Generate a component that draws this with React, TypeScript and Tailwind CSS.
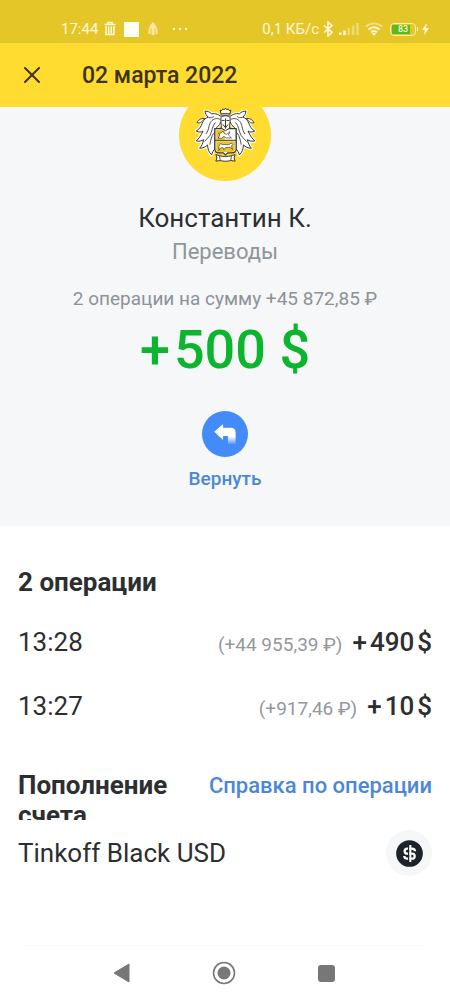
import * as React from 'react';

interface Operation {
  time: string;
  rub: string;
  amount: string;
}

const operations: Operation[] = [
  { time: '13:28', rub: '(+44 955,39 ₽)', amount: '490' },
  { time: '13:27', rub: '(+917,46 ₽)', amount: '10' },
];

const StatusBar = () => (
  <div className="flex h-[43px] items-end justify-between bg-[#e4c629] pr-[21px] pb-1 pl-[61px] text-[15px] leading-5 text-[#fdf8d8]">
    <div className="flex items-center">
      <span>17:44</span>
      <svg className="ml-[6px] h-4 w-3" viewBox="0 0 12 16" fill="none" stroke="currentColor">
        <path d="M0.5 3.5h11M4 3V1.5h4V3" strokeWidth="1.6" />
        <path d="M2 5v8.5h8V5M4.7 5.5v7M7.3 5.5v7" strokeWidth="1.6" />
      </svg>
      <span className="ml-2 size-[15px] bg-[#fffef5]" />
      <svg className="ml-[9px] h-4 w-[10px] opacity-70" viewBox="0 0 10 16" fill="currentColor">
        <path d="M5 1C2.500 3.500 1.500 5 1.500 7L.5 8v5h2V7.500h1V14h3V7.500h1V13h2V8l-1-1C8.500 5 7.500 3.500 5 1Z" />
      </svg>
      <svg className="ml-[14px] h-4 w-4" viewBox="0 0 16 16" fill="currentColor">
        <circle cx="2" cy="8" r="1.200" />
        <circle cx="8" cy="8" r="1.200" />
        <circle cx="14" cy="8" r="1.200" />
      </svg>
    </div>
    <div className="flex items-center">
      <span>0,1 КБ/с</span>
      <svg className="ml-1 h-4 w-[10px]" viewBox="0 0 10 16" fill="none" stroke="currentColor" strokeWidth="1.600">
        <path d="M1 4.500 9 11.300 5 15V1l4 3.700L1 11.500" />
      </svg>
      <svg className="ml-[6px] h-4 w-5" viewBox="0 0 20 16" fill="currentColor">
        <path d="M0 11.500h2.500V14H0zM4.300 9.500h2.500V14H4.300z" />
        <path d="M8.600 7h2.500v7H8.600zM12.900 4.500h2.500V14h-2.500zM17.200 2h2.500v12h-2.500z" opacity=".4" />
      </svg>
      <svg className="ml-[6px] h-4 w-[18px]" viewBox="0 0 18 16" fill="none" stroke="currentColor" strokeWidth="2">
        <path d="M.8 5.800a11.600 11.600 0 0 1 16.400 0" opacity=".5" />
        <path d="M3.400 8.600a8 8 0 0 1 11.200 0M6 11.300a4.300 4.300 0 0 1 6 0" />
        <path d="m9 15-2-2.200a2.800 2.800 0 0 1 4 0z" fill="currentColor" stroke="none" />
      </svg>
      <span className="ml-[7px] flex h-[13px] w-[26px] items-center rounded border border-[#f7efb5] p-px">
        <span className="flex h-[9px] w-[18px] items-center justify-center bg-[#5dba1d] pl-1 text-[9px] leading-none font-medium">83</span>
      </span>
      <span className="ml-px h-1 w-px bg-[#f7efb5]" />
      <svg className="ml-1 h-3 w-[7px]" viewBox="0 0 7 12" fill="currentColor">
        <path d="M4.800 0 0 7h2.800L2 12l5-7H4z" />
      </svg>
    </div>
  </div>
);

const leaf =
  'M84 32C72 22 62 18 50 20 44 14 38 12 30 12c2 8 4 14 10 18-8 2-14 8-18 18-4 10-8 18-18 24 8 4 14 4 20 0-6 14-12 22-20 30 8 2 16 0 22-4-2 12-6 18-12 26 10 0 18-4 24-10 0 12 4 22 12 30 2-8 6-14 10-18V66c10-6 18-18 24-34Z';

// One half of the mantling, mirrored for the other side
const Mantling = () => (
  <g strokeLinejoin="round" strokeLinecap="round">
    <path d={leaf} fill="#fff" stroke="#fff" strokeWidth="9" />
    <path d={leaf} fill="#fff" stroke="#33322d" strokeWidth="3" />
    <path
      d="M74 36C62 31 52 37 46 47c-6 12-3 21-12 33M61 47c-10 9-8 25-16 38-6 8-10 12-16 18M57 78c-8 9-9 20-12 34M42 31c5 2 10 1 14-2"
      fill="none"
      stroke="#33322d"
      strokeWidth="2.500"
    />
    <path d="M28 34C18 33 10 38 6 47c10 2 17-3 22-13Z" fill="#fff" stroke="#33322d" strokeWidth="2.500" />
  </g>
);

const Crest = () => (
  <svg className="h-14 w-[61px]" viewBox="0 0 184 168" role="img" aria-label="Tinkoff">
    <Mantling />
    <g transform="translate(184 0) scale(-1 1)">
      <Mantling />
    </g>
    <path d="M60 65h64v62c0 8-7 11-14 11H99l-7 6-7-6H74c-8 0-14-3-14-11Z" fill="#fff" stroke="#37352c" strokeWidth="3.500" />
    <path d="M64 69h26v29H64zM64 103h56v27c0 3-4 5-9 5H73c-5 0-9-2-9-5Z" fill="#eec221" />
    <path d="M60 100h64" stroke="#37352c" strokeWidth="3" />
    <path
      d="m70 93 5-9-4-5 8-1 5-6 4 7 8 3 9-8-4 10 9 9H94l-7-5-7 6zM72 118l5-8 7 3h19l6-5 5 5-4 4 3 11-7-7-14 1-5 7-3-7-8 2-4 7Z"
      fill="#fff"
      stroke="#37352c"
      strokeWidth="2"
      strokeLinejoin="round"
    />
    <path d="M79 63c2-8-2-15-1-31 5-8 23-8 28 0 1 16-3 23-1 31l-13 8Z" fill="#fff" stroke="#37352c" strokeWidth="3" />
    <path d="M80 40h9M95 40h9M92 34v31M84 52l8 10 8-10" fill="none" stroke="#37352c" strokeWidth="3" />
    <path d="M76 9c4 3 7 1 8-4 3 4 6 3 8-2 2 5 5 6 8 2 1 5 4 7 8 4l-3 15H79Z" fill="#fff" stroke="#37352c" strokeWidth="3" />
    <path d="M79 19h26" stroke="#37352c" strokeWidth="2.500" />
    <path
      d="m63 143 10 3c12 4 26 4 38 0l10-3-3 10 3 10-13-2c-11 3-21 3-32 0l-13 2 3-10Z"
      fill="#fff"
      stroke="#37352c"
      strokeWidth="3"
    />
    <path d="m74 147 2 13M110 147l-2 13" stroke="#37352c" strokeWidth="2.500" />
  </svg>
);

const ReturnIcon = () => (
  <svg className="h-5 w-[22px]" viewBox="0 0 66 62">
    <defs>
      <linearGradient id="tail" x1="0" y1="0" x2="0" y2="1">
        <stop offset="0.1" stopColor="#fff" />
        <stop offset="1" stopColor="#fff" stopOpacity="0.1" />
      </linearGradient>
    </defs>
    <path d="M0 24 24 2q3-2 3 2v8h24q15 0 15 15v10H27v9q0 4-3 1Z" fill="#fff" />
    <path d="M42 37h24v25H42Z" fill="url(#tail)" />
  </svg>
);

const DollarIcon = () => (
  <svg className="size-[27px]" viewBox="0 0 81 81">
    <circle cx="40.500" cy="40.500" r="40" fill="#1d222b" />
    <g fill="none">
      <path d="M57 34c0-5-4-8-9-8H34c-5 0-8 3-8 7.500s3 7.500 8 7.500h14c5 0 8 3 8 7.500S53 56 48 56H34c-5 0-9-3-9-8" stroke="#fff" strokeWidth="7" />
      <path d="M38 18v46" stroke="#1d222b" strokeWidth="4" />
      <path d="M43 15v51" stroke="#fff" strokeWidth="6" />
    </g>
  </svg>
);

const Summary = () => (
  <section className="flex flex-col items-center overflow-hidden bg-[#f5f7f9] pb-[33px] text-center">
    <div className="-mt-[18px] flex size-[92px] items-center justify-center rounded-full bg-[#ffdc2f]">
      <Crest />
    </div>
    <h2 className="mt-[19px] text-[26px] leading-9 text-[#2d2e30]">Константин К.</h2>
    <p className="text-[22px] leading-8 text-[#909599]">Переводы</p>
    <p className="mt-[17px] text-[19px] leading-7 text-[#8d9297]">2 операции на сумму +45 872,85 ₽</p>
    <p className="mt-[5px] flex gap-1 text-[54px] leading-[64px] font-medium text-[#0db52f]">
      <span>+</span>
      <span>500 $</span>
    </p>
    <button type="button" className="mt-[29px] flex flex-col items-center gap-2 text-[19px] leading-7 font-medium text-[#4a87d9]">
      <span className="flex size-[46px] items-center justify-center rounded-full bg-[#428bf9]">
        <ReturnIcon />
      </span>
      Вернуть
    </button>
  </section>
);

const OperationRow = ({ operation }: { operation: Operation }) => (
  <li className="flex h-16 items-center justify-between">
    <span className="text-[26px]">{operation.time}</span>
    <span className="flex items-baseline gap-[10px]">
      <span className="text-[19px] text-[#94989c]">{operation.rub}</span>
      <span className="flex gap-[3px] text-[26px] font-medium">
        <span>+</span>
        <span>{operation.amount}</span>
        <span>$</span>
      </span>
    </span>
  </li>
);

export default function App() {
  return (
    <div className="flex min-h-screen flex-col bg-white font-[Roboto,sans-serif] text-[#2d2e30]">
      <StatusBar />
      <header className="flex h-16 items-center gap-[42px] bg-[#ffdc2f] px-6 text-[#3c3318]">
        <button type="button" aria-label="Закрыть">
          <svg className="size-4" viewBox="0 0 16 16" fill="none" stroke="currentColor" strokeWidth="2" strokeLinecap="round">
            <path d="m1 1 14 14M15 1 1 15" />
          </svg>
        </button>
        <h1 className="pt-[2px] text-[23px] leading-8 font-medium">02 марта 2022</h1>
      </header>

      <main>
        <Summary />

        <section className="px-[18px] pt-10">
          <h2 className="mb-3 text-[26px] leading-8 font-bold">2 операции</h2>
          <ul>
            {operations.map((operation) => (
              <OperationRow key={operation.time} operation={operation} />
            ))}
          </ul>
        </section>

        <section className="px-[18px] pt-8">
          {/* The second line of the title is cut by the account row */}
          <div className="flex h-[50px] items-start justify-between overflow-hidden">
            <h2 className="w-40 text-[26px] leading-[30px] font-bold">Пополнение счета</h2>
            <a href="#" className="text-[22px] leading-8 font-medium text-[#4a87d9]">Справка по операции</a>
          </div>
          <div className="mt-[10px] flex items-center justify-between">
            <span className="text-[26px]">Tinkoff Black USD</span>
            <span className="flex size-[46px] items-center justify-center rounded-full bg-[#f5f7f9]">
              <DollarIcon />
            </span>
          </div>
        </section>
      </main>

      <nav className="mx-6 mt-auto flex h-[55px] items-center justify-center gap-[82px] border-t border-[#fafafa] pr-1 text-[#777]">
        <button type="button" aria-label="Назад">
          <svg className="h-5 w-[18px]" viewBox="0 0 18 20" fill="currentColor">
            <path d="M2 10 17 1v18z" stroke="currentColor" strokeLinejoin="round" />
          </svg>
        </button>
        <button type="button" aria-label="Домой">
          <svg className="size-6" viewBox="0 0 24 24" fill="none" stroke="currentColor">
            <circle cx="12" cy="12" r="10.500" strokeWidth="1.600" />
            <circle cx="12" cy="12" r="6.500" fill="currentColor" stroke="none" />
          </svg>
        </button>
        <button type="button" aria-label="Недавние">
          <span className="block size-[17px] rounded-[3px] bg-[#777]" />
        </button>
      </nav>
    </div>
  );
}
